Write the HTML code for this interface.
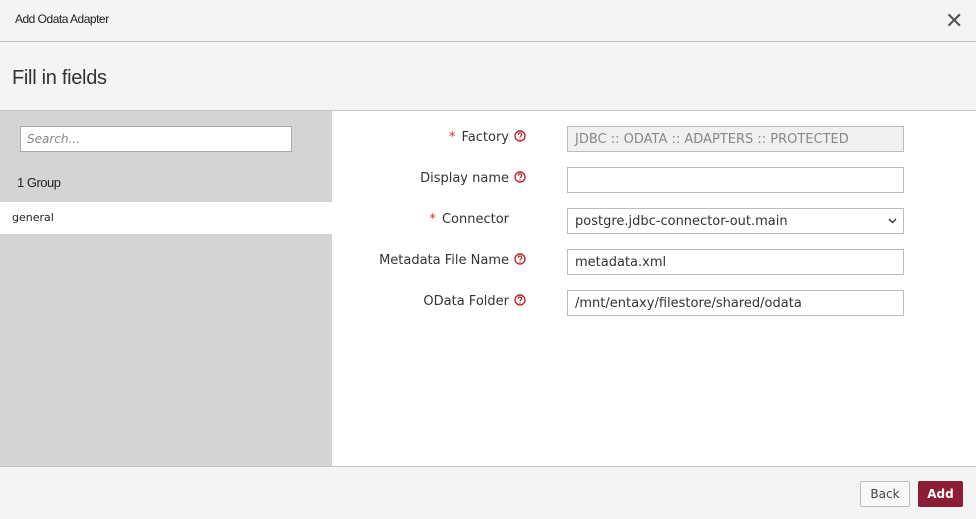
<!DOCTYPE html>
<html><head><style>
*{box-sizing:border-box;margin:0;padding:0}
body{width:976px;height:519px;position:relative;background:#fff;font-family:"Liberation Sans",sans-serif;overflow:hidden}
.abs{position:absolute}
.hdr{left:0;top:0;width:976px;height:42px;background:#f4f4f4;border-bottom:1px solid #c4c4c4}
.t1{left:15px;top:12px;font-size:12px;color:#222;letter-spacing:-0.5px}
.x{left:945px;top:8px;font-size:22px;color:#555}
.fill{left:0;top:42px;width:976px;height:69px;background:#f4f4f4;border-bottom:1px solid #c4c4c4}
.t2{left:12px;top:67px;font-size:20px;color:#333;letter-spacing:-0.3px}
.side{left:0;top:111px;width:332px;height:355px;background:#d4d4d4}
.search{left:20px;top:126px;width:272px;height:26px;background:#fff;border:1px solid #aaa;font-style:italic;color:#888;padding:5px 6px;font-family:"DejaVu Sans",sans-serif;font-size:12px}
.grp{left:17px;top:175px;font-size:13px;color:#222;letter-spacing:-0.5px}
.gen{left:0;top:202px;width:332px;height:32px;background:#fff;color:#222;padding:9px 12px;font-family:"DejaVu Sans",sans-serif;font-size:11px}
.lbl{right:450px;font-family:"DejaVu Sans",sans-serif;font-size:13px;color:#333;white-space:nowrap}
.lbl b{color:#c0303a;font-weight:normal;margin-right:6px}
.q{display:inline-block;width:12px;height:12px;margin-left:5px;vertical-align:-1px}
.inp{left:567px;width:337px;height:26px;border:1px solid #bbb;background:#fff;font-family:"DejaVu Sans",sans-serif;font-size:13px;color:#333;padding:5px 7px;white-space:nowrap}
.foot{left:0;top:466px;width:976px;height:53px;background:#f4f4f4;border-top:1px solid #c4c4c4}
.back{left:860px;top:481px;width:50px;height:26px;border:1px solid #bbb;background:#f8f8f8;font-family:"DejaVu Sans",sans-serif;font-size:12px;color:#444;text-align:center;line-height:24px;border-radius:2px}
.add{left:918px;top:481px;width:45px;height:26px;background:#8b1d35;font-family:"DejaVu Sans",sans-serif;font-size:12px;font-weight:bold;color:#fff;text-align:center;line-height:26px;border-radius:2px}
</style></head><body>
<div class="abs hdr"></div><div class="abs t1">Add Odata Adapter</div><div class="abs x">✕</div>
<div class="abs fill"></div><div class="abs t2">Fill in fields</div>
<div class="abs side"></div>
<div class="abs search">Search...</div>
<div class="abs grp">1 Group</div>
<div class="abs gen">general</div>

<div class="abs lbl" style="top:130px"><b>*</b>Factory<svg class="q" viewBox="0 0 12 12"><circle cx="6" cy="6" r="5" fill="none" stroke="#b02a35" stroke-width="1.4"/><path d="M4.3 4.7a1.7 1.7 0 1 1 2.4 1.5c-.5.3-.7.6-.7 1.1" fill="none" stroke="#b02a35" stroke-width="1.2"/><circle cx="6" cy="9" r=".7" fill="#b02a35"/></svg></div>
<div class="abs inp" style="top:126px;background:#f0f0f0;color:#888;">JDBC :: ODATA :: ADAPTERS :: PROTECTED</div>
<div class="abs lbl" style="top:171px">Display name<svg class="q" viewBox="0 0 12 12"><circle cx="6" cy="6" r="5" fill="none" stroke="#b02a35" stroke-width="1.4"/><path d="M4.3 4.7a1.7 1.7 0 1 1 2.4 1.5c-.5.3-.7.6-.7 1.1" fill="none" stroke="#b02a35" stroke-width="1.2"/><circle cx="6" cy="9" r=".7" fill="#b02a35"/></svg></div>
<div class="abs inp" style="top:167px"></div>
<div class="abs lbl" style="top:212px"><b>*</b>Connector<span style="display:inline-block;width:17px"></span></div>
<div class="abs inp" style="top:208px">postgre.jdbc-connector-out.main<svg style="position:absolute;right:6px;top:9px" width="9" height="6" viewBox="0 0 9 6"><path d="M1 1l3.5 3.5L8 1" fill="none" stroke="#333" stroke-width="1.4"/></svg></div>
<div class="abs lbl" style="top:253px">Metadata File Name<svg class="q" viewBox="0 0 12 12"><circle cx="6" cy="6" r="5" fill="none" stroke="#b02a35" stroke-width="1.4"/><path d="M4.3 4.7a1.7 1.7 0 1 1 2.4 1.5c-.5.3-.7.6-.7 1.1" fill="none" stroke="#b02a35" stroke-width="1.2"/><circle cx="6" cy="9" r=".7" fill="#b02a35"/></svg></div>
<div class="abs inp" style="top:249px">metadata.xml</div>
<div class="abs lbl" style="top:294px">OData Folder<svg class="q" viewBox="0 0 12 12"><circle cx="6" cy="6" r="5" fill="none" stroke="#b02a35" stroke-width="1.4"/><path d="M4.3 4.7a1.7 1.7 0 1 1 2.4 1.5c-.5.3-.7.6-.7 1.1" fill="none" stroke="#b02a35" stroke-width="1.2"/><circle cx="6" cy="9" r=".7" fill="#b02a35"/></svg></div>
<div class="abs inp" style="top:290px">/mnt/entaxy/filestore/shared/odata</div>

<div class="abs foot"></div>
<div class="abs back">Back</div>
<div class="abs add">Add</div>
</body></html>
